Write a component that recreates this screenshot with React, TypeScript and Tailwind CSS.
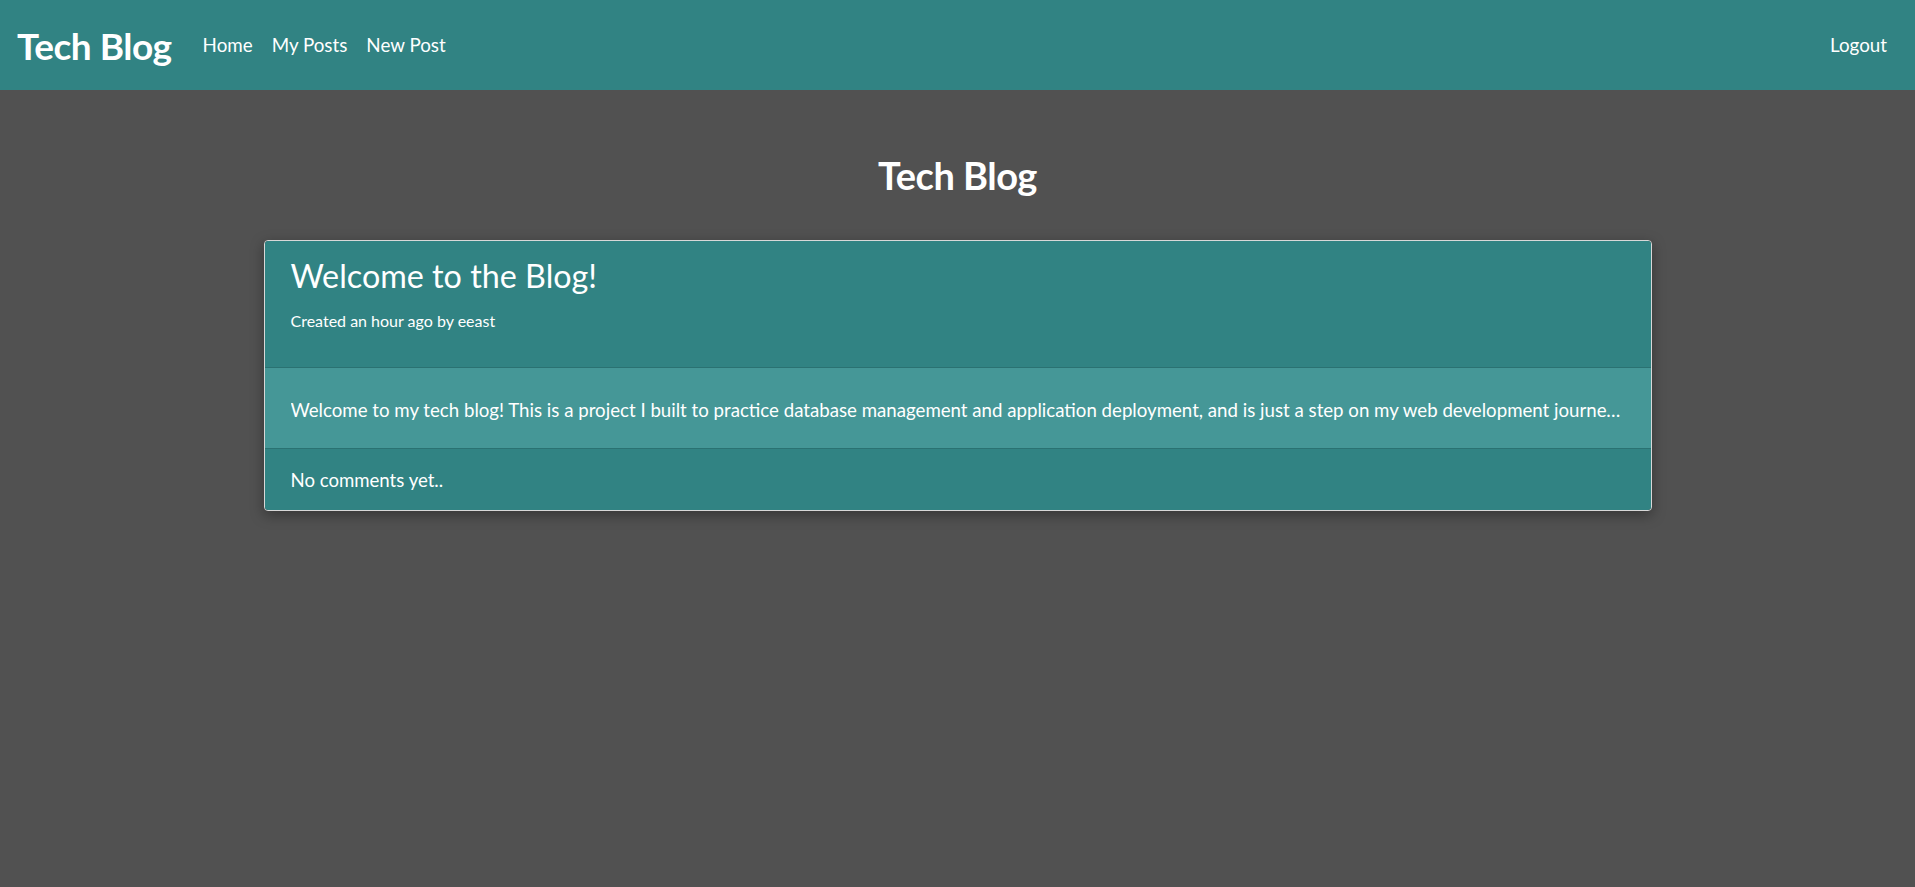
export default function App() {
  return (
    <div className="min-h-screen bg-[#515151] font-['Lato','Open_Sans',sans-serif] text-white">
      {/* Navbar */}
      <nav className="h-[90px] bg-[#318383] flex items-center justify-between pl-[17px] pr-[28px]">
        <div className="flex items-center">
          <a href="#" className="text-[37px] font-bold leading-none tracking-[-0.5px] mr-[31px]">
            Tech Blog
          </a>
          <div className="flex items-center gap-[19px] text-[18.8px]">
            <a href="#">Home</a>
            <a href="#">My Posts</a>
            <a href="#">New Post</a>
          </div>
        </div>
        <a href="#" className="text-[18.8px]">Logout</a>
      </nav>

      {/* Page title */}
      <h1 className="text-center text-[38px] font-bold leading-none mt-[66px] mb-[46px] tracking-[-0.5px]">
        Tech Blog
      </h1>

      {/* Post card */}
      <div className="w-[1388px] mx-auto border border-[#d8d8d8] rounded-[4px] overflow-hidden shadow-[0_4px_14px_rgba(0,0,0,0.35)]">
        <div className="bg-[#318383] px-[26px] pt-[16px] pb-[34px] border-b border-[#2a7272]">
          <h2 className="text-[32.3px] leading-[1.2]">Welcome to the Blog!</h2>
          <p className="text-[16px] mt-[13px]">Created an hour ago by eeast</p>
        </div>
        <div className="bg-[#459797] px-[26px] pt-[7px] h-[81px] flex items-center border-b border-[#2a7272]">
          <p className="text-[18.66px] whitespace-nowrap overflow-hidden text-ellipsis">
            Welcome to my tech blog! This is a project I built to practice database management and application deployment, and is just a step on my web development journey. Thanks for visiting!
          </p>
        </div>
        <div className="bg-[#318383] px-[26px] pt-[4px] h-[61px] flex items-center">
          <p className="text-[18.6px]">No comments yet..</p>
        </div>
      </div>
    </div>
  );
}
